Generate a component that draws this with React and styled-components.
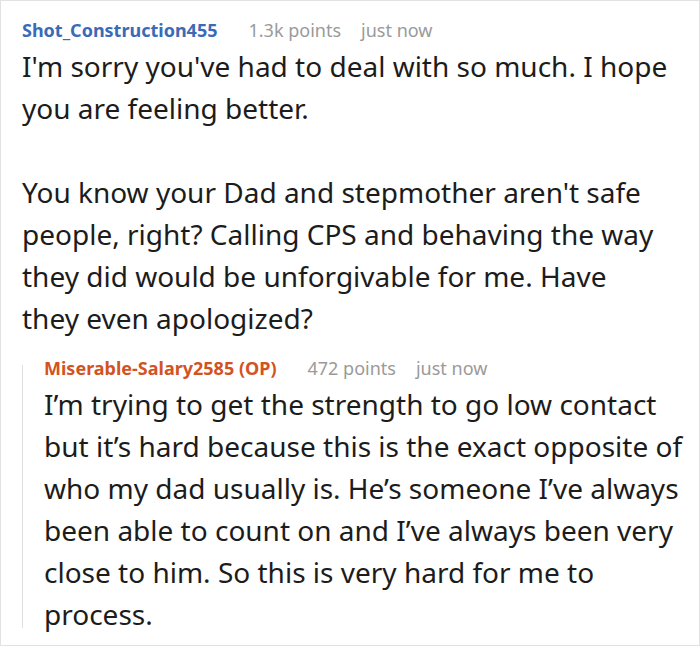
import React from "react";
import styled, { createGlobalStyle } from "styled-components";

const Global = createGlobalStyle`
  html, body {
    margin: 0;
    padding: 0;
    background: #fff;
  }
  body {
    font-family: "Noto Sans", "Open Sans", sans-serif;
  }
`;

const Frame = styled.div`
  box-sizing: border-box;
  width: 700px;
  height: 646px;
  border: 1px solid #e2e2e2;
  padding: 14px 0 0 21px;
  overflow: hidden;
  color: #1c1c1c;
`;

const Meta = styled.div`
  display: flex;
  align-items: baseline;
  font-size: 18px;
  line-height: 30px;
`;

const Author = styled.span`
  font-weight: 700;
  color: ${(p) => p.color};
  margin-right: 31px;
`;

const Faint = styled.span`
  color: #9a9a9a;
  margin-right: 20px;
`;

const Body = styled.div`
  font-size: 28px;
  line-height: 42px;
  width: ${(p) => p.width}px;

  p {
    margin: 0;
  }
  p + p {
    margin-top: 42px;
  }
`;

const Reply = styled.div`
  position: relative;
  margin-top: 14px;
  padding-left: 22px;

  &::before {
    content: "";
    position: absolute;
    left: 0;
    top: 12px;
    bottom: 7px;
    width: 1px;
    background: #dedede;
  }
`;

function Comment({ author, color, points, width, children }) {
  return (
    <>
      <Meta>
        <Author color={color}>{author}</Author>
        <Faint>{points} points</Faint>
        <Faint>just now</Faint>
      </Meta>
      <Body width={width}>{children}</Body>
    </>
  );
}

export default function App() {
  return (
    <Frame>
      <Global />
      <Comment author="Shot_Construction455" color="#3b6ab6" points="1.3k" width={656}>
        <p>I'm sorry you've had to deal with so much. I hope you are feeling better.</p>
        <p>
          You know your Dad and stepmother aren't safe people, right? Calling CPS and
          behaving the way they did would be unforgivable for me. Have
          <br />
          they even apologized?
        </p>
      </Comment>
      <Reply>
        <Comment author="Miserable-Salary2585 (OP)" color="#d2531f" points="472" width={640}>
          <p>
            I’m trying to get the strength to go low contact but it’s hard because this is
            the exact opposite of who my dad usually is. He’s someone I’ve always been able
            to count on and I’ve always been very close to him. So this is very hard for me
            to process.
          </p>
        </Comment>
      </Reply>
    </Frame>
  );
}
